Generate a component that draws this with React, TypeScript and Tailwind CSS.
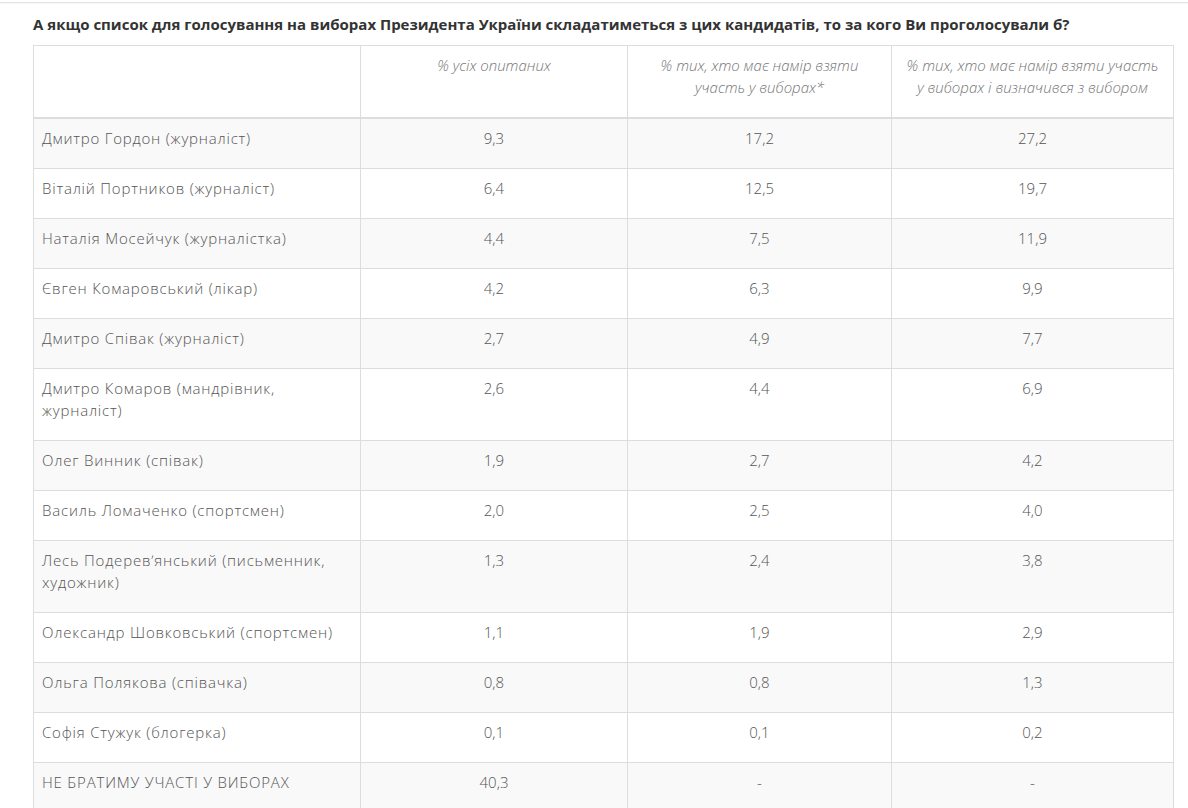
import React from 'react';

type Row = { name: string; a: string; b: string; c: string };

const rows: Row[] = [
  { name: 'Дмитро Гордон (журналіст)', a: '9,3', b: '17,2', c: '27,2' },
  { name: 'Віталій Портников (журналіст)', a: '6,4', b: '12,5', c: '19,7' },
  { name: 'Наталія Мосейчук (журналістка)', a: '4,4', b: '7,5', c: '11,9' },
  { name: 'Євген Комаровський (лікар)', a: '4,2', b: '6,3', c: '9,9' },
  { name: 'Дмитро Співак (журналіст)', a: '2,7', b: '4,9', c: '7,7' },
  { name: 'Дмитро Комаров (мандрівник, журналіст)', a: '2,6', b: '4,4', c: '6,9' },
  { name: 'Олег Винник (співак)', a: '1,9', b: '2,7', c: '4,2' },
  { name: 'Василь Ломаченко (спортсмен)', a: '2,0', b: '2,5', c: '4,0' },
  { name: 'Лесь Подерев\u02BCянський (письменник, художник)', a: '1,3', b: '2,4', c: '3,8' },
  { name: 'Олександр Шовковський (спортсмен)', a: '1,1', b: '1,9', c: '2,9' },
  { name: 'Ольга Полякова (співачка)', a: '0,8', b: '0,8', c: '1,3' },
  { name: 'Софія Стужук (блогерка)', a: '0,1', b: '0,1', c: '0,2' },
  { name: 'НЕ БРАТИМУ УЧАСТІ У ВИБОРАХ', a: '40,3', b: '-', c: '-' },
];

const cell = 'border border-[#dddddd] px-2 pt-2 pb-[19px] align-top leading-[22px]';

export default function App() {
  return (
    <div className="min-h-[808px] bg-white font-['Open_Sans','Noto_Sans',sans-serif] text-[15px] text-[#555]">
      <div className="mt-[2px] border-t border-[#e4e4e4] shadow-[0_1px_1px_rgba(0,0,0,0.04)]" />
      <div className="px-[33px] pt-[11px]">
        <h2 className="text-[15px] font-bold leading-[20px] text-[#333]">
          А якщо список для голосування на виборах Президента України складатиметься з цих кандидатів, то за кого Ви проголосували б?
        </h2>
        <table className="mt-[11px] w-[1140px] table-fixed border-collapse">
          <thead>
            <tr>
              <th className={`${cell} w-[327px] border-b-2`} />
              <th className={`${cell} w-[267px] border-b-2 text-center font-light italic text-[#777]`}>% усіх опитаних</th>
              <th className={`${cell} w-[264px] border-b-2 px-[30px] text-center font-light italic text-[#777]`}>
                % тих, хто має намір взяти участь у виборах*
              </th>
              <th className={`${cell} w-[282px] border-b-2 px-[13px] text-center font-light italic text-[#777]`}>
                % тих, хто має намір взяти участь у виборах і визначився з вибором
              </th>
            </tr>
          </thead>
          <tbody>
            {rows.map((r, i) => (
              <tr key={r.name} className={i % 2 === 0 ? 'bg-[#f9f9f9]' : 'bg-white'}>
                <td className={`${cell} font-light tracking-[0.8px]`}>{r.name}</td>
                <td className={`${cell} text-center font-light`}>{r.a}</td>
                <td className={`${cell} text-center font-light`}>{r.b}</td>
                <td className={`${cell} text-center font-light`}>{r.c}</td>
              </tr>
            ))}
          </tbody>
        </table>
      </div>
    </div>
  );
}
